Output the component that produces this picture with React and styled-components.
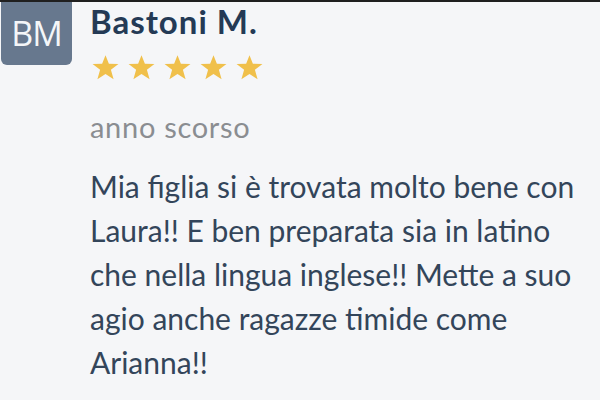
import React from "react";
import styled, { createGlobalStyle } from "styled-components";

const GlobalStyle = createGlobalStyle`
	html, body {
		margin: 0;
		padding: 0;
		background: #f5f6f8;
	}
	body {
		font-family: Lato, "Open Sans", sans-serif;
	}
`;

const Page = styled.div`
	width: 600px;
	height: 400px;
	box-sizing: border-box;
	border-top: 2px solid #1f1f1f;
	background: #f5f6f8;
	overflow: hidden;
`;

const Review = styled.div`
	display: grid;
	grid-template-columns: 71px 1fr;
	column-gap: 18px;
	padding-left: 1px;
	padding-right: 6px;
`;

const Avatar = styled.div`
	height: 63px;
	border-radius: 0 0 6px 6px;
	background: #67788e;
	color: #f4f6f8;
	font-family: "Open Sans", sans-serif;
	font-size: 34px;
	display: flex;
	align-items: center;
	justify-content: center;
	letter-spacing: -1px;
	padding-bottom: 2px;
	box-sizing: border-box;
`;

const Body = styled.div`
	display: flex;
	flex-direction: column;
`;

const Name = styled.div`
	font-weight: 700;
	font-size: 33px;
	line-height: 36px;
	letter-spacing: 1px;
	margin-top: 1px;
	color: #243a55;
`;

const Stars = styled.div`
	display: flex;
	gap: 9px;
	margin-top: 15px;
	padding-left: 2px;
`;

const When = styled.div`
	font-size: 29px;
	line-height: 32px;
	letter-spacing: 0.7px;
	margin-top: 30px;
	color: #8a8d91;
`;

const Text = styled.p`
	margin: 21px 0 0;
	font-size: 30px;
	line-height: 44px;
	color: #33455a;
`;

const Star = () => (
	<svg width='27' height='27' viewBox='0 0 24 23'>
		<polygon
			fill='#f0c04b'
			points='12,0.5 15,8.2 23.5,8.4 16.8,13.6 19.2,22 12,17.2 4.8,22 7.2,13.6 0.5,8.4 9,8.2'
		/>
	</svg>
);

const App = () => {
	return (
		<>
			<GlobalStyle />
			<Page>
				<Review>
					<Avatar>BM</Avatar>
					<Body>
						<Name>Bastoni M.</Name>
						<Stars>
							{[0, 1, 2, 3, 4].map(i => (
								<Star key={i} />
							))}
						</Stars>
						<When>anno scorso</When>
						<Text>
							Mia figlia si è trovata molto bene con Laura!! E ben preparata sia
							in latino che nella lingua inglese!! Mette a suo agio anche
							ragazze timide come Arianna!!
						</Text>
					</Body>
				</Review>
			</Page>
		</>
	);
};

export default App;
